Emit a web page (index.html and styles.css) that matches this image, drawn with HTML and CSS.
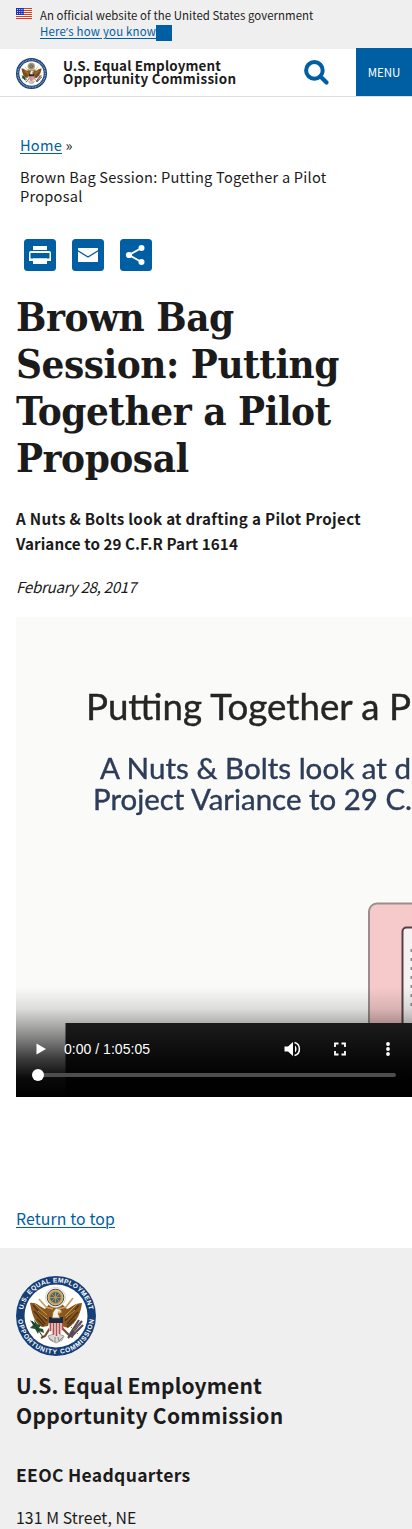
FILE: index.html
```html
<!DOCTYPE html>
<html lang="en">
<head>
<meta charset="utf-8">
<meta name="viewport" content="width=device-width, initial-scale=1">
<title>Brown Bag Session: Putting Together a Pilot Proposal</title>
<link rel="stylesheet" href="styles.css">
</head>
<body>
<svg class="defs" width="0" height="0" aria-hidden="true">
  <defs>
    <path id="ring-top" d="M6.4 40A33.6 33.6 0 0 1 73.6 40"/>
    <path id="ring-bottom" d="M2 40A38 38 0 0 0 78 40"/>
    <symbol id="eagle" viewBox="0 0 80 80">
      <circle cx="40" cy="40" r="40" fill="#173f77"/>
      <circle cx="40" cy="40" r="31.5" fill="#fff"/>
      <path d="M32 60q8-4 16 0l-2 4-6 3-6-3z" fill="#d9d8d3" stroke="#85827c" stroke-width=".7"/>
      <path d="M33 62l4 3m2-4v5m3-5 1 4m4-4-4 4" fill="none" stroke="#77746f" stroke-width=".8"/>
      <path d="M14 27c7-1 10 4 15 6l5-6 4-2h5l3 3 5 5c5-2 8-6 15-6-1 8-4 19-14 25l-6-2-1-8H34l-2 8-6 1C18 47 16 37 14 27z" fill="#8a571f"/>
      <path d="M17 29l14 16m-13-10 11 13m-8-5 7 7m35-21L49 45m13-9L51 48m8-5-8 8" fill="none" stroke="#4c3219" stroke-width="1.3"/>
      <path d="M19 28l12 11m-9-4 9 8m30-15L49 40m10-6-9 8" fill="none" stroke="#d5a553" stroke-width=".9"/>
      <path d="M34 52l-5 8-4 2m21-10 7 7 4 2" fill="none" stroke="#735032" stroke-width="2.2"/>
      <path d="M14 44l5 3-1-4 3 5 4 1-2 3 4 1 1 4-5-2-1 3-3-5-5-1 3-3z" fill="#25512f"/>
      <path d="M16 45l11 16" stroke="#183d23" stroke-width="1"/>
      <path d="M52 62l14-17m-11 16 12-12m-13 9 9-14" stroke="#544b59" stroke-width="2.1"/>
      <path d="M57 54l8-6m-10 3 7 7" stroke="#89766c" stroke-width="1"/>
      <path d="M33 42h14v10c0 4-3 7-7 8-4-1-7-4-7-8z" fill="#eee"/>
      <path d="M34.5 46v9m3-9v13m3-13v14m3-14v12m3-12v8" stroke="#b84b4b" stroke-width="1.7"/>
      <path d="M33 41h14v6H33z" fill="#1b2942"/>
      <path d="M36 42l1-6 3-4 4 1 2 3-4 1 2 5z" fill="#f3f0e9" stroke="#8e6b3b" stroke-width=".8"/>
      <path d="M42 35l4 1-3 2" fill="#dfad42"/>
      <path d="M23 23l7 8 7 2m20-11-7 9-8 2" fill="none" stroke="#c7a060" stroke-width="1.7"/>
      <circle cx="39.5" cy="21.5" r="10" fill="#fff" stroke="#d5c49b" stroke-width=".7"/>
      <circle cx="39.5" cy="21.5" r="8.3" fill="#d2b479" stroke="#3b4857" stroke-width="1"/>
      <circle cx="39.5" cy="21.5" r="6" fill="#48637b" stroke="#c99e43" stroke-width="1.2"/>
      <path d="M36 18l7 7m0-7-7 7m-2-3.5h11m-5.5-5v10" stroke="#d0a13c" stroke-width=".8"/>
    </symbol>
    <symbol id="seal-mark" viewBox="0 0 80 80">
      <use href="#eagle"/>
      <circle cx="40" cy="40" r="35.5" fill="none" stroke="#e9edf2" stroke-width="3.2" stroke-dasharray="2.2 1.8" opacity=".65"/>
    </symbol>
  </defs>
</svg>

<section class="banner">
  <svg class="flag" viewBox="0 0 16 11">
    <path fill="#fff" d="M0 0h16v11H0z"/>
    <path d="M0 .5h16M0 2.5h16M0 4.5h16M0 6.5h16M0 8.5h16M0 10.5h16" stroke="#db3e1f"/>
    <path fill="#1e33b1" d="M0 0h8v7H0z"/>
    <path d="M1 1.5h7M1 3.5h7M1 5.5h7" stroke="#fff" stroke-width=".8" stroke-dasharray="1 1.2"/>
  </svg>
  <div class="banner-text">
    <p>An official website of the United States government</p>
    <p class="know"><a href="#">Here<span class="apostrophe">’</span>s how you know</a><span class="know-box"></span></p>
  </div>
</section>

<header class="header">
  <svg class="seal-small"><use href="#seal-mark"/></svg>
  <div class="site-name"><span>U.S. Equal Employment</span><br><span class="wide">Opportunity Commission</span></div>
  <svg class="search" viewBox="0 0 26 26"><circle cx="10.4" cy="10.4" r="8.3" fill="none" stroke="#005ea2" stroke-width="4"/><path d="M16.5 16.5l6 6" stroke="#005ea2" stroke-width="4.2" stroke-linecap="round"/></svg>
  <button class="menu">MENU</button>
</header>

<main class="main">
  <nav class="crumbs">
    <div><a href="#">Home</a> <span>»</span></div>
    <div class="current">Brown Bag Session: Putting Together a Pilot<br>Proposal</div>
  </nav>
  <div class="share">
    <svg viewBox="0 0 32 32"><rect width="32" height="32" rx="3.5" fill="#005ea2"/><path fill="#fff" d="M9 7h14v4H9zM7 12h18a2 2 0 0 1 2 2v8h-4v3H9v-3H5v-8a2 2 0 0 1 2-2z"/><path fill="#005ea2" d="M6.5 14h19v5.5h-19z"/><path fill="#fff" d="M9 19.5h14V25H9z"/></svg>
    <svg viewBox="0 0 32 32"><rect width="32" height="32" rx="3.5" fill="#005ea2"/><path fill="#fff" d="M6 9h20v14H6z"/><path d="M5.5 11.5L16 18l10.5-6.5" fill="none" stroke="#005ea2" stroke-width="1.3"/></svg>
    <svg viewBox="0 0 32 32"><rect width="32" height="32" rx="3.5" fill="#005ea2"/><path d="M21.5 9L9 16l12.5 7" fill="none" stroke="#fff" stroke-width="2"/><g fill="#fff"><circle cx="21.5" cy="9" r="3"/><circle cx="9" cy="16" r="3.1"/><circle cx="21.5" cy="23" r="3"/></g></svg>
  </div>
  <h1>Brown Bag<br>Session: Putting<br>Together a Pilot<br>Proposal</h1>
  <p class="lead"><span class="lead-first">A Nuts &amp; Bolts look at drafting a Pilot Project</span><br>Variance to 29 C.F.R Part 1614</p>
  <p class="date">February 28, 2017</p>

  <svg class="video" viewBox="0 0 396 480">
    <defs>
      <linearGradient id="shade" x1="0" y1="0" x2="0" y2="1">
        <stop offset="0" stop-color="#000" stop-opacity="0"/>
        <stop offset=".2" stop-color="#000" stop-opacity=".12"/>
        <stop offset=".45" stop-color="#000" stop-opacity=".46"/>
        <stop offset=".65" stop-color="#000" stop-opacity=".76"/>
        <stop offset=".83" stop-color="#000" stop-opacity=".96"/>
        <stop offset="1" stop-color="#000"/>
      </linearGradient>
      <filter id="soft"><feGaussianBlur stdDeviation=".6"/></filter>
    </defs>
    <path fill="#fafaf9" d="M0 0h396v480H0z"/>
    <g class="slide" filter="url(#soft)">
      <text x="70" y="103" font-size="36" fill="#252525" stroke="#252525" textLength="325" lengthAdjust="spacingAndGlyphs">Putting Together a P</text>
      <text x="84" y="161.500" font-size="29" fill="#2d3c59" stroke="#2d3c59" textLength="311" lengthAdjust="spacingAndGlyphs">A Nuts &amp; Bolts look at d</text>
      <text x="77" y="192.500" font-size="29" fill="#2d3c59" stroke="#2d3c59" textLength="319" lengthAdjust="spacingAndGlyphs">Project Variance to 29 C.</text>
      <rect x="353" y="286.500" width="80" height="180" rx="8" fill="#f6caca" stroke="#9b8e8a" stroke-width="2"/>
      <rect x="386.500" y="310.500" width="60" height="160" rx="4" fill="#f5f3f1" stroke="#554047" stroke-width="2"/>
      <path d="M395.500 332v60" stroke="#888" stroke-dasharray="3 6" stroke-width="2"/>
      <path d="M49.500 406H400v80H49.500z" fill="#272727"/>
    </g>
    <path fill="url(#shade)" d="M0 370h396v110H0z"/>
    <path d="M20.500 426.500v11l9.500-5.500z" fill="#fff"/>
    <text class="time" x="48" y="437" textLength="86">0:00 / 1:05:05</text>
    <path d="M268.500 429.500v5h3.500l5 4.500v-14l-5 4.500z" fill="#fff"/>
    <path d="M279 428.500c2 1.500 2 5.500 0 7" fill="#fff"/><path d="M278.500 425.500c6.500 1.500 6.500 11.500 0 13" fill="none" stroke="#fff" stroke-width="1.500"/>
    <path d="M319 430v-3.500h3.500m3 0h3.500v3.500m0 4v3.500h-3.500m-3 0H319V434" fill="none" stroke="#fff" stroke-width="1.800"/>
    <g fill="#fff"><circle cx="372" cy="427" r="1.900"/><circle cx="372" cy="432" r="1.900"/><circle cx="372" cy="437" r="1.900"/></g>
    <rect x="20" y="456" width="360" height="4" rx="2" fill="#4d4d4d"/>
    <circle cx="22" cy="458" r="6" fill="#fff"/>
  </svg>
  <a class="return" href="#">Return to top</a>
</main>

<footer class="footer">
  <svg class="seal" viewBox="0 0 80 80">
    <use href="#eagle"/>
    <g class="seal-text">
      <text><textPath href="#ring-top" startOffset="6%" textLength="93">U.S. EQUAL EMPLOYMENT</textPath></text>
      <text><textPath href="#ring-bottom" startOffset="3%" textLength="112">OPPORTUNITY COMMISSION</textPath></text>
    </g>
  </svg>
  <h2><span>U.S. Equal Employment</span><br><span class="wide">Opportunity Commission</span></h2>
  <h3>EEOC Headquarters</h3>
  <p class="address">131 M Street, NE</p>
</footer>
</body>
</html>
```

FILE: styles.css
```css
* { box-sizing: border-box; }
body {
  margin: 0;
  height: 1529px;
  overflow: hidden;
  background: #fff;
  color: #1b1b1b;
  font-family: "Noto Sans CJK SC", sans-serif;
  font-size: 15.2px;
}
p, h1, h2, h3 { margin: 0; }
svg { display: block; flex: none; }
a { color: #005ea2; text-decoration: underline; text-underline-offset: 1.5px; text-decoration-thickness: 1px; }
.defs { position: absolute; }

.banner { display: flex; gap: 8px; height: 49px; padding: 7px 16px 0; background: #efefef; }
.flag { width: 16px; height: 11px; margin-top: 1px; }
.banner-text { font-size: 11.4px; line-height: 16px; letter-spacing: .06px; white-space: nowrap; }
.know { display: flex; }
.know a { width: 116px; letter-spacing: .22px; }
.apostrophe { font-family: "Open Sans", sans-serif; }
.know-box { width: 16px; height: 16px; margin-top: 2px; background: #005ea2; }

.header { display: flex; height: 48px; padding-left: 16px; border-bottom: 1px solid #dcdee0; }
.seal-small { width: 31px; height: 31px; margin-top: 9px; }
.site-name { width: 241px; margin: 10px 0 0 16px; font-size: 13.4px; line-height: 13px; font-weight: 700; letter-spacing: .14px; white-space: nowrap; }
.site-name .wide { letter-spacing: .32px; }
.search { width: 26px; height: 26px; margin: 11px 0 0; }
.menu { width: 56px; height: 48px; margin: -1px 0 0 26px; padding: 0; border: 0; background: #005ea2; color: #fff; font: 11.5px/48px "Noto Sans CJK SC", sans-serif; }

.main { display: flex; flex-direction: column; height: 1151px; padding: 38px 0 0 16px; }
.crumbs { padding-left: 4px; font-size: 14.6px; line-height: 19px; letter-spacing: .23px; white-space: nowrap; }
.current { margin-top: 13px; }
.share { display: flex; gap: 16px; margin: 34px 0 0 8px; }
.share svg { width: 32px; height: 32px; }
h1 { margin-top: 22px; font: 700 40px/47px "DejaVu Serif Condensed", "DejaVu Serif", serif; letter-spacing: -.47px; white-space: nowrap; }
.lead { margin-top: 25px; line-height: 25px; font-weight: 700; letter-spacing: .07px; white-space: nowrap; }
.lead-first { letter-spacing: .29px; }
.date { margin-top: 18px; line-height: 25px; font-style: italic; letter-spacing: -.32px; }
.video { width: 396px; height: 480px; margin-top: 18px; }
.slide { font-family: Lato, sans-serif; stroke-width: .4px; }
.time { fill: #fff; font: 14px "Liberation Sans", sans-serif; }
.return { align-self: flex-start; margin-top: 109px; font-size: 15.8px; line-height: 25px; letter-spacing: .14px; }

.footer { height: 281px; padding: 28px 16px 0; background: #efefef; overflow: hidden; white-space: nowrap; }
.seal { width: 80px; height: 80px; }
.seal-text { fill: #fff; font: 700 6.6px "Liberation Sans", sans-serif; }
h2 { margin-top: 14px; font-size: 21px; line-height: 30px; letter-spacing: .14px; }
h2 .wide { letter-spacing: .3px; }
h3 { margin-top: 32px; font-size: 17.5px; line-height: 25px; letter-spacing: .32px; }
.address { margin-top: 18px; font-size: 15.8px; line-height: 25px; letter-spacing: .08px; }
```
